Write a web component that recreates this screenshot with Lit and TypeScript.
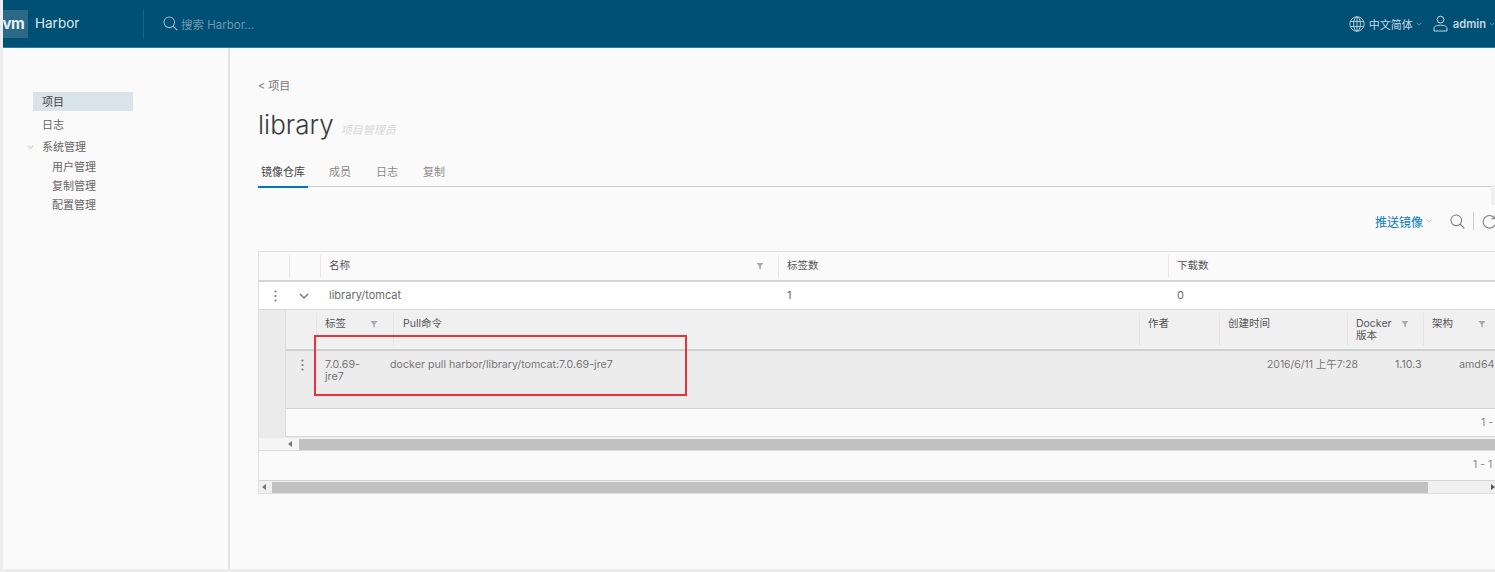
import { LitElement, html, css } from "lit";
import { customElement } from "lit/decorators.js";

const chev = (cls: string) => html`<svg class=${cls} viewBox="0 0 10 6"><path d="M1 1l4 4 4-4" fill="none" stroke="currentColor" stroke-width="1.2"/></svg>`;
const search = (cls: string) => html`<svg class=${cls} viewBox="0 0 16 16"><circle cx="6.7" cy="6.7" r="5.7" fill="none" stroke="currentColor" stroke-width="1.1"/><path d="M10.8 10.8l4.5 4.5" stroke="currentColor" stroke-width="1.3" fill="none"/></svg>`;
const filter = (cls: string) => html`<svg class="filter ${cls}" viewBox="0 0 8 8"><path d="M0.5 1h7L4.8 4.2V7.5L3.2 6.5V4.2z" fill="#a4aaae"/></svg>`;
const dots = html`<svg class="dots" viewBox="0 0 3 12"><circle cx="1.5" cy="1.5" r="1.1"/><circle cx="1.5" cy="6" r="1.1"/><circle cx="1.5" cy="10.5" r="1.1"/></svg>`;

@customElement("app-root")
export class AppRoot extends LitElement {
  static styles = css`
    :host { display: block; width: 1495px; height: 572px; overflow: hidden; background: #ececec; font-family: Inter, "Noto Sans CJK SC", sans-serif; font-size: 11px; color: #666; }
    .page { margin-left: 3px; height: 569px; display: flex; flex-direction: column; background: #fafafa; position: relative; overflow: hidden; }
    header { height: 47px; flex: none; background: #004f74; border-bottom: 1px solid #2b7c9e; display: flex; align-items: center; color: #fff; box-sizing: content-box; }
    .logo { width: 25px; height: 28px; background: #2c6988; font-size: 15px; font-weight: 700; display: flex; align-items: center; justify-content: flex-end; overflow: hidden; color: #eaf2f6; letter-spacing: -0.6px; box-sizing: border-box; padding-right: 4px; }
    .brand { margin-left: 7px; font-size: 13.5px; color: #dfeaf0; width: 108px; height: 47px; line-height: 46px; }
    .sep { width: 1px; height: 30px; background: #1b6285; }
    .sicon { width: 15px; height: 15px; color: #9dbccb; margin-left: 19px; }
    .ph { margin-left: 3px; color: #6e99af; font-size: 11.5px; flex: 1; }
    .lang { display: flex; align-items: center; color: #c4d8e2; font-size: 11px; }
    .globe { width: 16px; height: 16px; margin-right: 4px; color: #c4d8e2; }
    .user { width: 15px; height: 17px; margin: 0 5px 0 11px; color: #c4d8e2; }
    .admin { font-weight: 600; font-size: 11.2px; }
    .hchev { width: 6px; height: 4px; margin-left: 3px; color: #8fb0c0; }
    .body { flex: 1; display: flex; min-height: 0; }
    nav { width: 225px; flex: none; border-right: 2px solid #e2e2e2; box-sizing: content-box; padding-top: 44px; font-size: 11px; color: #666; }
    .ni { margin-left: 30px; height: 19px; line-height: 21px; padding-left: 9px; width: 91px; box-sizing: content-box; }
    .ni.act { background: #d9e4ea; color: #444; margin-bottom: 4px; }
    .ni.gap { margin-bottom: 3px; }
    .ni.grp { position: relative; margin-bottom: 1px; }
    .grpchev { position: absolute; left: -6px; top: 8px; width: 7px; height: 4px; color: #a8a8a8; }
    .sub { height: 19px; line-height: 21px; padding-left: 49px; }
    main { flex: 1; min-width: 0; padding: 29px 0 0 28px; overflow: hidden; position: relative; }
    .crumb { font-size: 11px; color: #777; height: 18px; line-height: 18px; }
    h1 { margin: 12px 0 0; font-size: 26px; font-weight: 300; color: #3a3a3a; height: 36px; line-height: 36px; display: flex; align-items: baseline; }
    h1 span { font-size: 11px; font-style: italic; color: #d8d8d8; margin-left: 7px; font-weight: 400; }
    .tabs { margin-top: 13px; height: 30px; border-bottom: 1px solid #ccc; display: flex; box-sizing: content-box; }
    .tab { padding: 0 2px; margin-right: 21px; line-height: 33px; color: #8a8a8a; height: 30px; font-size: 11px; }
    .tab.act { color: #444; border-bottom: 2px solid #0079b8; margin-right: 19px; width: 46px; text-align: center; }
    .toolbar { margin-top: 25px; height: 18px; display: flex; justify-content: flex-end; align-items: center; color: #0079b8; font-size: 12px; }
    .tchev { width: 6px; height: 4px; margin: 0 18px 0 3px; color: #8aa; }
    .ticon { width: 15px; height: 15px; color: #777; }
    .tsep { width: 1px; height: 18px; background: #ccc; margin: 0 8px 0 8px; }
    .refresh { width: 15px; height: 15px; color: #777; margin-right: -2px; flex: none; }
    .table { margin-top: 21px; width: 1300px; border: 1px solid #e0e0e0; box-sizing: border-box; }
    .ohead { display: flex; height: 28px; border-bottom: 2px solid #d4d4d4; box-sizing: content-box; color: #555; line-height: 27px; font-size: 10.5px; }
    .c { position: relative; flex: none; box-sizing: border-box; padding-left: 9px; height: 100%; white-space: nowrap; }
    .s::before { content: ""; position: absolute; left: 0; top: 3px; bottom: 3px; width: 1px; background: #e6e6e6; }
    .filter { width: 8px; height: 8px; position: absolute; top: 10px; }
    .f436 { left: 436px; }
    .f54 { left: 54px; }
    .f55 { left: 55px; }
    .orow { display: flex; height: 27px; background: #fff; line-height: 26px; color: #6a6a6a; border-bottom: 1px solid #dadada; box-sizing: content-box; }
    .dots { width: 3px; height: 12px; fill: #777; position: absolute; left: 15px; top: 8px; }
    .exp { width: 10px; height: 6px; position: absolute; left: 10px; top: 11px; color: #666; }
    .nest { background: #ebebeb; padding-left: 26px; height: 128px; }
    .inner { background: #fafafa; border-left: 1px solid #dcdcdc; height: 127px; border-bottom: 1px solid #d8d8d8; box-sizing: border-box; }
    .ihead { display: flex; height: 41px; background: #f0f0f0; border-bottom: 2px solid #cfcfcf; color: #555; font-size: 10.5px; box-sizing: border-box; line-height: 12px; }
    .ihead .c { padding-top: 8px; }
    .irow { display: flex; height: 58px; background: #ececec; border-bottom: 1px solid #d2d2d2; line-height: 12px; color: #777; font-size: 10.7px; box-sizing: border-box; }
    .irow .c { padding-top: 8px; white-space: normal; }
    .irow .nw { white-space: nowrap; }
    .date { font-size: 10.4px; }
    .w30 { width: 30px; } .w31 { width: 31px; } .w458 { width: 458px; } .w390 { width: 390px; } .w380 { width: 380px; }
    .w77 { width: 77px; } .w746 { width: 746px; padding-left: 10px; } .w80 { width: 80px; } .w128 { width: 128px; } .w76 { width: 76px; }
    .w65 { width: 65px; } .w877 { width: 877px; } .w64 { width: 64px; }
    .ifoot { height: 26px; line-height: 27px; position: relative; color: #888; font-size: 10.5px; padding-left: 1195px; white-space: nowrap; }
    .bar { height: 12px; display: flex; align-items: center; border-bottom: 1px solid #dcdcdc; background: #f5f5f5; box-sizing: content-box; }
    .arrow { width: 0; height: 0; border: 3px solid transparent; border-right: 4px solid #777; border-left: 0; margin: 0 6px 0 3px; flex: none; }
    .arrow.in { margin-left: 29px; margin-right: 7px; }
    .thumb { height: 11px; background: #c1c1c1; }
    .t1 { width: 1200px; }
    .t2 { width: 1156px; }
    .ofoot { height: 29px; line-height: 28px; color: #888; font-size: 10.5px; border-bottom: 1px solid #d4d4d4; padding-left: 1214px; white-space: nowrap; background: #fafafa; }
    .obar { height: 12px; display: flex; align-items: center; background: #f0f0f0; position: relative; }
    .endarrow { position: absolute; left: 1232px; top: 3px; width: 0; height: 0; border: 3px solid transparent; border-left: 4px solid #555; border-right: 0; }
    .mark { position: absolute; left: 311px; top: 335px; width: 373px; height: 61px; box-sizing: border-box; border: 2px solid #e7343a; pointer-events: none; }
    .edge { position: absolute; right: 0; top: 185px; width: 4px; height: 20px; background: #efefef; }
  `;

  render() {
    return html`<div class="page">
      <header>
        <div class="logo">vm</div>
        <div class="brand">Harbor</div>
        <div class="sep"></div>
        ${search("sicon")}
        <div class="ph">搜索 Harbor...</div>
        <div class="lang">
          <svg class="globe" viewBox="0 0 16 16" fill="none" stroke="currentColor" stroke-width="0.9"><circle cx="8" cy="8" r="7.2"/><ellipse cx="8" cy="8" rx="3.4" ry="7.2"/><path d="M1.5 5.4h13M1.5 10.6h13M8 .8v14.4"/></svg>
          中文简体${chev("hchev")}
          <svg class="user" viewBox="0 0 15 17" fill="none" stroke="currentColor" stroke-width="1"><circle cx="7.5" cy="4.6" r="3.4"/><path d="M1 16v-2.6c0-2 2.2-3.2 6.5-3.2s6.5 1.2 6.5 3.2V16z"/></svg>
          <span class="admin">admin</span>${chev("hchev")}
        </div>
      </header>
      <div class="body">
        <nav>
          <div class="ni act">项目</div>
          <div class="ni gap">日志</div>
          <div class="ni grp">${chev("grpchev")}系统管理</div>
          <div class="sub">用户管理</div>
          <div class="sub">复制管理</div>
          <div class="sub">配置管理</div>
        </nav>
        <main>
          <div class="crumb">&lt; 项目</div>
          <h1>library<span>项目管理员</span></h1>
          <div class="tabs">
            <div class="tab act">镜像仓库</div>
            <div class="tab">成员</div>
            <div class="tab">日志</div>
            <div class="tab">复制</div>
          </div>
          <div class="toolbar">
            <span>推送镜像</span>${chev("tchev")}
            ${search("ticon")}
            <div class="tsep"></div>
            <svg class="refresh" viewBox="0 0 16 16" fill="none" stroke="currentColor" stroke-width="1.1"><path d="M13.5 4.5A6.7 6.7 0 1 0 14.7 8"/><path d="M14 1v4h-4"/></svg>
          </div>
          <div class="table">
            <div class="ohead">
              <div class="c w30"></div>
              <div class="c s w31"></div>
              <div class="c s w458">名称${filter("f436")}</div>
              <div class="c s w390">标签数</div>
              <div class="c s w380">下载数</div>
            </div>
            <div class="orow">
              <div class="c w30">${dots}</div>
              <div class="c w31">${chev("exp")}</div>
              <div class="c w458">library/tomcat</div>
              <div class="c w390">1</div>
              <div class="c w380">0</div>
            </div>
            <div class="nest">
              <div class="inner">
                <div class="ihead">
                  <div class="c w30"></div>
                  <div class="c s w77">标签${filter("f54")}</div>
                  <div class="c s w746">Pull命令</div>
                  <div class="c s w80">作者</div>
                  <div class="c s w128">创建时间</div>
                  <div class="c s w76">Docker<br />版本${filter("f54")}</div>
                  <div class="c s w76">架构${filter("f55")}</div>
                </div>
                <div class="irow">
                  <div class="c w30">${dots}</div>
                  <div class="c w65">7.0.69-<br />jre7</div>
                  <div class="c w877 nw">docker pull harbor/library/tomcat:7.0.69-jre7</div>
                  <div class="c w128 nw date">2016/6/11 上午7:28</div>
                  <div class="c w64">1.10.3</div>
                  <div class="c w64">amd64</div>
                </div>
                <div class="ifoot">1 - 1</div>
              </div>
            </div>
            <div class="bar"><div class="arrow in"></div><div class="thumb t1"></div></div>
            <div class="ofoot">1 - 1 共</div>
            <div class="obar"><div class="arrow"></div><div class="thumb t2"></div><div class="endarrow"></div></div>
          </div>
        </main>
      </div>
      <div class="mark"></div>
      <div class="edge"></div>
    </div>`;
  }
}
